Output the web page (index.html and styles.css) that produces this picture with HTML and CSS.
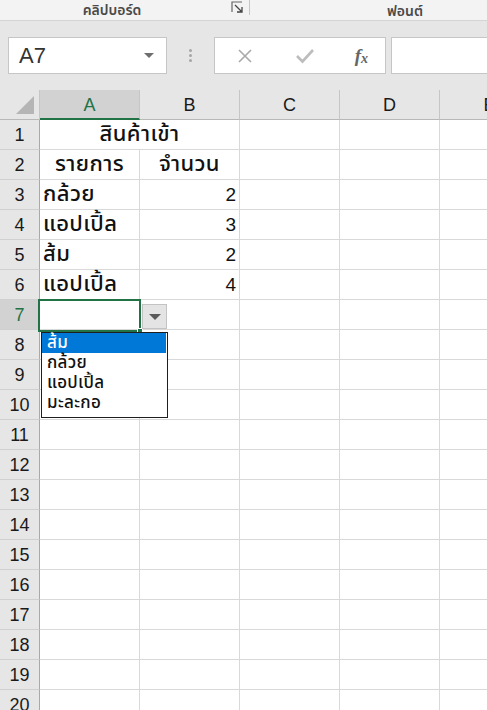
FILE: index.html
```html
<!DOCTYPE html>
<html lang="th">
<head>
    <meta charset="UTF-8">
    <meta name="viewport" content="width=device-width, initial-scale=1.0">
    <title>สินค้าเข้า - Excel</title>
    <link rel="stylesheet" href="styles.css">
</head>
<body>
    <div class="ribbon-labels">
        <div class="group clipboard">
            <span class="group-name">คลิปบอร์ด</span>
            <svg class="launcher" width="13" height="13" viewBox="0 0 13 13">
                <path d="M1 11 V1 H11" fill="none" stroke="#666" stroke-width="1.2"/>
                <path d="M4 4 L11 11 M11 6 V11 H6" fill="none" stroke="#444" stroke-width="1.3"/>
            </svg>
        </div>
        <div class="group font">
            <span class="group-name">ฟอนต์</span>
        </div>
    </div>

    <div class="formula-bar">
        <div class="name-box">
            <span>A7</span>
            <span class="caret"></span>
        </div>
        <div class="grip"><i></i><i></i><i></i></div>
        <div class="fx-box">
            <svg width="20" height="20" viewBox="0 0 20 20">
                <path d="M4 4 L16 16 M16 4 L4 16" stroke="#a9a9a9" stroke-width="1.6" fill="none"/>
            </svg>
            <svg width="22" height="20" viewBox="0 0 22 20">
                <path d="M3 10 L8.5 15.5 L19 4" stroke="#bdbdbd" stroke-width="2.6" fill="none"/>
            </svg>
            <span class="fx">f<sub>x</sub></span>
        </div>
        <div class="formula-input"></div>
    </div>

    <div class="sheet">
        <div class="row head">
            <div class="corner"><span class="corner-tri"></span></div>
            <div class="col-head active">A</div>
            <div class="col-head">B</div>
            <div class="col-head">C</div>
            <div class="col-head">D</div>
            <div class="col-head">E</div>
        </div>
        <div class="row">
            <div class="row-head">1</div>
            <div class="cell merged center">สินค้าเข้า</div>
            <div class="cell"></div><div class="cell"></div><div class="cell"></div>
        </div>
        <div class="row">
            <div class="row-head">2</div>
            <div class="cell center">รายการ</div>
            <div class="cell center">จำนวน</div>
            <div class="cell"></div><div class="cell"></div><div class="cell"></div>
        </div>
        <div class="row">
            <div class="row-head">3</div>
            <div class="cell">กล้วย</div>
            <div class="cell num">2</div>
            <div class="cell"></div><div class="cell"></div><div class="cell"></div>
        </div>
        <div class="row">
            <div class="row-head">4</div>
            <div class="cell">แอปเปิ้ล</div>
            <div class="cell num">3</div>
            <div class="cell"></div><div class="cell"></div><div class="cell"></div>
        </div>
        <div class="row">
            <div class="row-head">5</div>
            <div class="cell">ส้ม</div>
            <div class="cell num">2</div>
            <div class="cell"></div><div class="cell"></div><div class="cell"></div>
        </div>
        <div class="row">
            <div class="row-head">6</div>
            <div class="cell">แอปเปิ้ล</div>
            <div class="cell num">4</div>
            <div class="cell"></div><div class="cell"></div><div class="cell"></div>
        </div>
        <div class="row current">
            <div class="row-head active">7</div>
            <div class="cell selected">
                <div class="selection"><span class="fill-handle"></span></div>
                <div class="list-button"><span class="caret"></span></div>
                <ul class="list">
                    <li class="highlight">ส้ม</li>
                    <li>กล้วย</li>
                    <li>แอปเปิ้ล</li>
                    <li>มะละกอ</li>
                </ul>
            </div>
            <div class="cell"></div><div class="cell"></div><div class="cell"></div><div class="cell"></div>
        </div>
        <div class="row"><div class="row-head">8</div><div class="cell"></div><div class="cell"></div><div class="cell"></div><div class="cell"></div><div class="cell"></div></div>
        <div class="row"><div class="row-head">9</div><div class="cell"></div><div class="cell"></div><div class="cell"></div><div class="cell"></div><div class="cell"></div></div>
        <div class="row"><div class="row-head">10</div><div class="cell"></div><div class="cell"></div><div class="cell"></div><div class="cell"></div><div class="cell"></div></div>
        <div class="row"><div class="row-head">11</div><div class="cell"></div><div class="cell"></div><div class="cell"></div><div class="cell"></div><div class="cell"></div></div>
        <div class="row"><div class="row-head">12</div><div class="cell"></div><div class="cell"></div><div class="cell"></div><div class="cell"></div><div class="cell"></div></div>
        <div class="row"><div class="row-head">13</div><div class="cell"></div><div class="cell"></div><div class="cell"></div><div class="cell"></div><div class="cell"></div></div>
        <div class="row"><div class="row-head">14</div><div class="cell"></div><div class="cell"></div><div class="cell"></div><div class="cell"></div><div class="cell"></div></div>
        <div class="row"><div class="row-head">15</div><div class="cell"></div><div class="cell"></div><div class="cell"></div><div class="cell"></div><div class="cell"></div></div>
        <div class="row"><div class="row-head">16</div><div class="cell"></div><div class="cell"></div><div class="cell"></div><div class="cell"></div><div class="cell"></div></div>
        <div class="row"><div class="row-head">17</div><div class="cell"></div><div class="cell"></div><div class="cell"></div><div class="cell"></div><div class="cell"></div></div>
        <div class="row"><div class="row-head">18</div><div class="cell"></div><div class="cell"></div><div class="cell"></div><div class="cell"></div><div class="cell"></div></div>
        <div class="row"><div class="row-head">19</div><div class="cell"></div><div class="cell"></div><div class="cell"></div><div class="cell"></div><div class="cell"></div></div>
        <div class="row"><div class="row-head">20</div><div class="cell"></div><div class="cell"></div><div class="cell"></div><div class="cell"></div><div class="cell"></div></div>
    </div>
</body>
</html>
```

FILE: styles.css
```css
* {
    box-sizing: border-box;
}
body {
    margin: 0;
    width: 487px;
    height: 710px;
    overflow: hidden;
    background-color: #e6e6e6;
    font-family: "Liberation Sans", "Noto Sans Thai", "Noto Sans", sans-serif;
    color: #222;
}

/* ribbon group names */
.ribbon-labels {
    display: flex;
    height: 21px;
    background-color: #f3f3f3;
    border-bottom: 1px solid #d4d4d4;
    white-space: nowrap;
}
.group {
    position: relative;
    flex: none;
    display: flex;
    justify-content: center;
    align-items: center;
    height: 20px;
    padding-top: 2px;
    font-size: 14px;
    font-weight: 600;
    color: #4a4a4a;
}
.group.clipboard {
    width: 250px;
    padding-right: 25px;
    border-right: 1px solid #c6c6c6;
    height: 15px;
    align-self: flex-start;
    padding-top: 6px;
}
.group.font {
    width: 310px;
}
.launcher {
    position: absolute;
    right: 5px;
    top: 1px;
}

/* formula bar */
.formula-bar {
    display: flex;
    align-items: center;
    height: 69px;
    padding: 16px 0 16px 8px;
}
.formula-bar > * {
    flex: none;
}
.name-box {
    display: flex;
    align-items: center;
    justify-content: space-between;
    width: 159px;
    height: 37px;
    padding: 0 12px 0 10px;
    background-color: white;
    border: 1px solid #c6c6c6;
    font-size: 22px;
    color: #333;
}
.caret {
    width: 0;
    height: 0;
    border-left: 5px solid transparent;
    border-right: 5px solid transparent;
    border-top: 5px solid #6e6e6e;
}
.grip {
    display: flex;
    flex-direction: column;
    gap: 2px;
    width: 47px;
    align-items: center;
}
.grip i {
    width: 3px;
    height: 3px;
    border-radius: 50%;
    background-color: #a6a6a6;
}
.fx-box {
    display: flex;
    align-items: center;
    justify-content: space-between;
    width: 172px;
    height: 37px;
    padding: 0 17px 0 20px;
    background-color: white;
    border: 1px solid #c6c6c6;
}
.fx {
    font-family: "Liberation Serif", serif;
    font-style: italic;
    font-weight: bold;
    font-size: 19px;
    color: #666;
}
.fx sub {
    font-size: 14px;
    vertical-align: -1px;
}
.formula-input {
    width: 120px;
    height: 37px;
    margin-left: 5px;
    background-color: white;
    border: 1px solid #c6c6c6;
}

/* grid */
.sheet {
    width: 540px;
}
.row {
    display: grid;
    grid-template-columns: 40px repeat(5, 100px);
    height: 30px;
}
.row.current {
    position: relative;
    z-index: 2;
}
.corner {
    position: relative;
    border-right: 1px solid #c6c6c6;
    border-bottom: 1px solid #b8b8b8;
}
.corner-tri {
    position: absolute;
    right: 5px;
    bottom: 5px;
    width: 0;
    height: 0;
    border-left: 18px solid transparent;
    border-bottom: 18px solid #b5b5b5;
}
.col-head {
    display: flex;
    align-items: center;
    justify-content: center;
    padding-top: 2px;
    border-right: 1px solid #c6c6c6;
    border-bottom: 1px solid #b8b8b8;
    font-size: 18px;
    color: #1a1a1a;
}
.col-head.active {
    background-color: #d2d2d2;
    border-bottom: 2px solid #217346;
    color: #217346;
}
.row-head {
    display: flex;
    align-items: center;
    justify-content: center;
    padding-top: 2px;
    background-color: #e6e6e6;
    border-right: 1px solid #a9a9a9;
    border-bottom: 1px solid #d0d0d0;
    font-size: 18px;
    color: #1a1a1a;
}
.row-head.active {
    background-color: #d2d2d2;
    color: #217346;
}
.cell {
    display: flex;
    align-items: flex-end;
    padding: 0 3px 0;
    background-color: white;
    border-right: 1px solid #d9d9d9;
    border-bottom: 1px solid #d9d9d9;
    font-family: "Noto Sans Thai", "Liberation Sans", "Noto Sans", sans-serif;
    font-size: 22px;
    font-weight: 500;
    letter-spacing: 0.4px;
    line-height: 28px;
    color: #111;
    white-space: nowrap;
}
.cell.merged {
    grid-column: span 2;
}
.cell.center {
    justify-content: center;
}
.cell.num {
    justify-content: flex-end;
    font-family: "Liberation Sans", sans-serif;
    font-size: 19px;
    font-weight: normal;
    letter-spacing: 0;
    line-height: 24px;
    padding-bottom: 2px;
}
.cell.selected {
    position: relative;
}
.selection {
    position: absolute;
    left: -2px;
    top: -1px;
    width: 103px;
    height: 33px;
    border: 2px solid #217346;
}
.fill-handle {
    position: absolute;
    right: -4px;
    bottom: -4px;
    width: 6px;
    height: 6px;
    background-color: #217346;
    border: 1px solid white;
}
.list-button {
    position: absolute;
    left: 102px;
    top: 4px;
    width: 25px;
    height: 25px;
    display: flex;
    align-items: center;
    justify-content: center;
    background-color: #e4e4e4;
    border: 1px solid #c3c3c3;
}
.list-button .caret {
    border-left-width: 6px;
    border-right-width: 6px;
    border-top-width: 6px;
    border-top-color: #5a5a5a;
}
.list {
    position: absolute;
    left: 1px;
    top: 32px;
    width: 127px;
    height: 86px;
    margin: 0;
    padding: 0;
    list-style: none;
    background-color: white;
    border: 1px solid #1e1e1e;
    font-size: 17px;
    font-weight: 500;
    letter-spacing: 0.3px;
    line-height: 20px;
}
.list li {
    height: 20px;
    padding-left: 5px;
    color: #111;
}
.list li.highlight {
    background-color: #0078d7;
    color: white;
    margin-right: 1px;
}
```
